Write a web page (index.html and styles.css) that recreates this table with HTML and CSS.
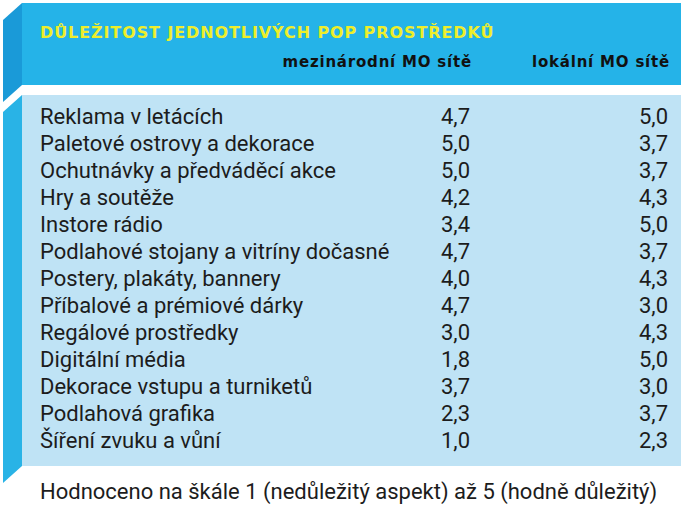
FILE: index.html
```html
<!DOCTYPE html>
<html lang="cs">
<head>
<meta charset="utf-8">
<link rel="stylesheet" href="styles.css">
</head>
<body>
<div class="chart">
  <div class="band head">
    <h1 class="title">DŮLEŽITOST JEDNOTLIVÝCH POP PROSTŘEDKŮ</h1>
    <div class="cols">
      <span></span>
      <span class="colh">mezinárodní MO sítě</span>
      <span class="colh">lokální MO sítě</span>
    </div>
  </div>
  <div class="band body">
    <div class="rows">
      <span>Reklama v letácích</span><span class="n">4,7</span><span class="n">5,0</span>
      <span>Paletové ostrovy a dekorace</span><span class="n">5,0</span><span class="n">3,7</span>
      <span>Ochutnávky a předváděcí akce</span><span class="n">5,0</span><span class="n">3,7</span>
      <span>Hry a soutěže</span><span class="n">4,2</span><span class="n">4,3</span>
      <span>Instore rádio</span><span class="n">3,4</span><span class="n">5,0</span>
      <span>Podlahové stojany a vitríny dočasné</span><span class="n">4,7</span><span class="n">3,7</span>
      <span>Postery, plakáty, bannery</span><span class="n">4,0</span><span class="n">4,3</span>
      <span>Příbalové a prémiové dárky</span><span class="n">4,7</span><span class="n">3,0</span>
      <span>Regálové prostředky</span><span class="n">3,0</span><span class="n">4,3</span>
      <span>Digitální média</span><span class="n">1,8</span><span class="n">5,0</span>
      <span>Dekorace vstupu a turniketů</span><span class="n">3,7</span><span class="n">3,0</span>
      <span>Podlahová grafika</span><span class="n">2,3</span><span class="n">3,7</span>
      <span>Šíření zvuku a vůní</span><span class="n">1,0</span><span class="n">2,3</span>
    </div>
  </div>
  <p class="note">Hodnoceno na škále 1 (nedůležitý aspekt) až 5 (hodně důležitý)</p>
</div>
</body>
</html>
```

FILE: styles.css
```css
html, body {
  margin: 0;
  padding: 0;
  background: #ffffff;
}
body {
  width: 688px;
  height: 508px;
  overflow: hidden;
  font-family: Roboto, "Liberation Sans", sans-serif;
  color: #1c1c1c;
}
.chart {
  padding-top: 3px;
}
.band {
  position: relative;
  margin-left: 22px;
  width: 659px;
  box-sizing: border-box;
  padding-left: 18px;
  padding-right: 11px;
}
.band::before {
  content: "";
  position: absolute;
  left: -19px;
  top: 0;
  width: 19px;
  height: calc(100% + 17px);
  clip-path: polygon(0 17px, 100% 0, 100% calc(100% - 17px), 0 100%);
}
.head {
  background: #25b3e8;
  height: 82px;
}
.head::before {
  background: #1a9ad8;
}
.body {
  margin-top: 10px;
  background: #bfe3f5;
  padding-top: 8px;
  padding-bottom: 12px;
}
.body::before {
  background: #29b3e6;
}
.title {
  margin: 0;
  padding-top: 21px;
  font-family: "DejaVu Sans", sans-serif;
  font-weight: bold;
  font-size: 16px;
  line-height: 18px;
  color: #eeee2a;
  letter-spacing: 0.9px;
}
.cols {
  display: grid;
  grid-template-columns: 1fr 220px 198px;
  margin-top: 11px;
  font-family: "DejaVu Sans", sans-serif;
  font-weight: bold;
  font-size: 15px;
  line-height: 18px;
  letter-spacing: 0.8px;
  color: #111;
}
.colh {
  text-align: right;
}
.rows {
  display: grid;
  grid-template-columns: 1fr 80px 198px;
  font-size: 22px;
  line-height: 27px;
}
.n {
  text-align: right;
  padding-right: 2px;
}
.note {
  margin: 14px 0 0 40px;
  font-size: 22px;
  line-height: 24px;
}
```
